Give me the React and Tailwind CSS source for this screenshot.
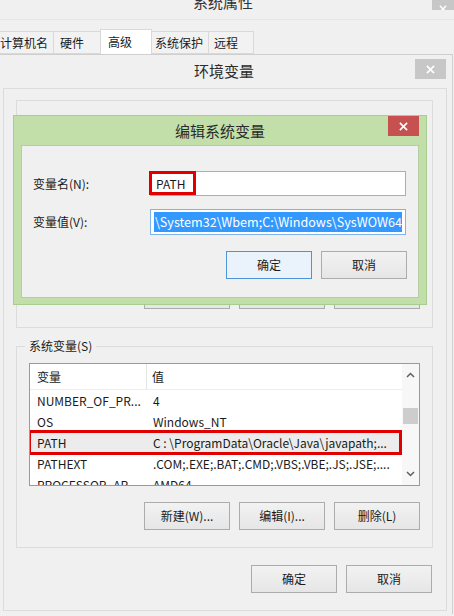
import React from "react";

const font = "font-['Microsoft_YaHei','Noto_Sans_CJK_SC',sans-serif]";

const CloseX = ({ size = 9 }) => (
  <svg width={size} height={size} viewBox="0 0 10 10">
    <path d="M1 1 L9 9 M9 1 L1 9" stroke="#fff" strokeWidth="1.8" />
  </svg>
);

const Btn = ({ children, primary, className = "" }) => (
  <div
    className={`w-[86px] h-[28px] flex items-center justify-center text-[12px] text-[#1a1a1a] border ${
      primary
        ? "border-[#4f93d8] bg-[#eaf2fb]"
        : "border-[#acacac] bg-gradient-to-b from-[#f2f2f2] to-[#e6e6e6]"
    } ${className}`}
  >
    {children}
  </div>
);

const rows = [
  ["NUMBER_OF_PR...", "4"],
  ["OS", "Windows_NT"],
  ["PATH", "C : \\ProgramData\\Oracle\\Java\\javapath;..."],
  ["PATHEXT", ".COM;.EXE;.BAT;.CMD;.VBS;.VBE;.JS;.JSE;...."],
  ["PROCESSOR_AR...", "AMD64"],
];

export default function App() {
  return (
    <div
      className={`relative w-[454px] h-[616px] overflow-hidden bg-[#f0f0f0] text-[#1a1a1a] ${font}`}
    >
      {/* System properties title bar */}
      <div className="relative h-[20px] flex justify-center border-b border-[#e6e6e6]">
        <span className="text-[15px] leading-[15px] -mt-[6px] pr-[8px] text-[#333]">
          系统属性
        </span>
        <div className="absolute right-0 top-0 w-[22px] h-[10px] bg-[#c7c7c7] flex items-end justify-center overflow-hidden">
          <div className="-mb-[3px]">
            <CloseX size={8} />
          </div>
        </div>
      </div>

      {/* Tabs */}
      <div className="flex items-end h-[34px] pt-[9px]">
        <div className="w-[60px] -ml-[6px] h-[23px] border border-[#d9d9d9] bg-[#f2f2f2] text-[12px] flex items-center pl-[5px]">
          计算机名
        </div>
        <div className="w-[48px] -ml-[1px] h-[23px] border border-[#d9d9d9] bg-[#f2f2f2] text-[12px] flex items-center pl-[6px]">
          硬件
        </div>
        <div className="w-[52px] -ml-[1px] h-[25px] border border-b-0 border-[#d9d9d9] bg-white text-[12px] flex items-start pt-[3px] pl-[7px] relative z-10">
          高级
        </div>
        <div className="w-[58px] -ml-[1px] h-[23px] border border-[#d9d9d9] bg-[#f2f2f2] text-[12px] flex items-center pl-[3px]">
          系统保护
        </div>
        <div className="w-[46px] -ml-[1px] h-[23px] border border-[#d9d9d9] bg-[#f2f2f2] text-[12px] flex items-center pl-[5px]">
          远程
        </div>
      </div>

      {/* Environment variables window */}
      <div className="w-[453px] h-[560px] border-t border-r border-[#cfcfcf] bg-[#f0f0f0] flex flex-col">
        <div className="relative h-[33px] flex items-center justify-center">
          <span className="text-[15px] text-[#2b2b2b] pr-[4px]">环境变量</span>
          <div className="absolute right-[6px] top-[4px] w-[31px] h-[20px] bg-[#c7c7c7] flex items-center justify-center">
            <CloseX />
          </div>
        </div>

        <div className="ml-[3px] w-[444px] h-[523px] border border-[#dcdcdc] flex flex-col">
          {/* User variables group (mostly hidden) */}
          <div className="ml-[12px] mt-[11px] w-[417px] h-[228px] border border-[#dcdcdc] flex flex-col justify-end pb-[18px] pr-[12px]">
            <div className="flex justify-end gap-[9px]">
              <Btn>新建(U)...</Btn>
              <Btn>编辑(E)...</Btn>
              <Btn>删除(D)</Btn>
            </div>
          </div>

          {/* System variables group */}
          <fieldset className="ml-[12px] mt-[9px] w-[417px] border border-[#dcdcdc] px-[12px] pb-[17px]">
            <legend className="ml-[-4px] px-[4px] text-[12px] leading-[18px]">系统变量(S)</legend>
            <div className="mt-[8px] h-[123px] border border-[#9a9a9a] bg-white flex overflow-hidden">
              <div className="w-[372px] flex flex-col">
                <div className="h-[26px] flex text-[12px] border-b border-[#ededed] shrink-0">
                  <div className="w-[117px] border-r border-[#e5e5e5] pl-[7px] flex items-center">变量</div>
                  <div className="pl-[5px] flex items-center">值</div>
                </div>
                {rows.map(([n, v]) => (
                  <div
                    key={n}
                    className={`relative h-[21px] shrink-0 flex items-center text-[12px] ${
                      n === "PATH" ? "bg-[#ececec]" : ""
                    }`}
                  >
                    <div className="w-[117px] pl-[7px] whitespace-nowrap">{n}</div>
                    <div className="pl-[6px] whitespace-nowrap">{v}</div>
                    {n === "PATH" && (
                      <span className="absolute left-[-2px] right-[0px] top-[-2px] bottom-[-2px] border-[3px] border-[#e00000]" />
                    )}
                  </div>
                ))}
              </div>
              <div className="w-[17px] bg-[#f7f7f7] flex flex-col items-center">
                <div className="h-[22px] flex items-center justify-center">
                  <svg width="9" height="6" viewBox="0 0 9 6">
                    <polyline points="1,5 4.5,1.5 8,5" fill="none" stroke="#606060" strokeWidth="1.5" />
                  </svg>
                </div>
                <div className="h-[22px]" />
                <div className="w-[15px] h-[16px] bg-[#cdcdcd]" />
                <div className="flex-1" />
                <div className="h-[22px] flex items-center justify-center">
                  <svg width="9" height="6" viewBox="0 0 9 6">
                    <polyline points="1,1 4.5,4.5 8,1" fill="none" stroke="#606060" strokeWidth="1.5" />
                  </svg>
                </div>
              </div>
            </div>
            <div className="mt-[16px] flex justify-end gap-[9px]">
              <Btn>新建(W)...</Btn>
              <Btn>编辑(I)...</Btn>
              <Btn>删除(L)</Btn>
            </div>
          </fieldset>

          <div className="mt-[17px] pr-[14px] flex justify-end gap-[9px]">
            <Btn>确定</Btn>
            <Btn>取消</Btn>
          </div>
        </div>
      </div>

      {/* Edit system variable dialog */}
      <div className="absolute left-[13px] top-[115px] w-[414px] h-[190px] bg-[#c2dfaa] border border-[#a9cd90] flex flex-col">
        <div className="relative h-[29px] flex items-center justify-center shrink-0">
          <span className="text-[15px] text-[#2b2b2b] pt-[2px]">编辑系统变量</span>
          <div className="absolute right-[7px] top-0 w-[31px] h-[20px] bg-[#c75050] flex items-center justify-center">
            <CloseX />
          </div>
        </div>
        <div className="mx-[7px] mb-[6px] flex-1 bg-[#f0f0f0] border border-[#b4cda4] pt-[25px] pl-[11px] pr-[11px]">
          <div className="flex items-center">
            <div className="w-[117px] text-[12px]">变量名(N):</div>
            <div className="relative w-[256px] h-[25px] border border-[#abadb3] bg-white flex items-center pl-[5px] text-[12px]">
              PATH
              <span className="absolute left-[-2px] top-[-1px] w-[47px] h-[24px] border-[3px] border-[#e00000]" />
            </div>
          </div>
          <div className="flex items-center mt-[13px]">
            <div className="w-[117px] text-[12px]">变量值(V):</div>
            <div className="w-[256px] h-[26px] border border-[#7eb4ea] bg-white px-[3px] py-[2px]">
              <div className="h-[20px] bg-[#3399ff] overflow-hidden flex justify-end">
                <span className="whitespace-nowrap text-white text-[12.6px] leading-[20px]">
                  \System32\Wbem;C:\Windows\SysWOW64
                </span>
              </div>
            </div>
          </div>
          <div className="mt-[16px] flex justify-end gap-[9px]">
            <Btn primary>确定</Btn>
            <Btn>取消</Btn>
          </div>
        </div>
      </div>
    </div>
  );
}
